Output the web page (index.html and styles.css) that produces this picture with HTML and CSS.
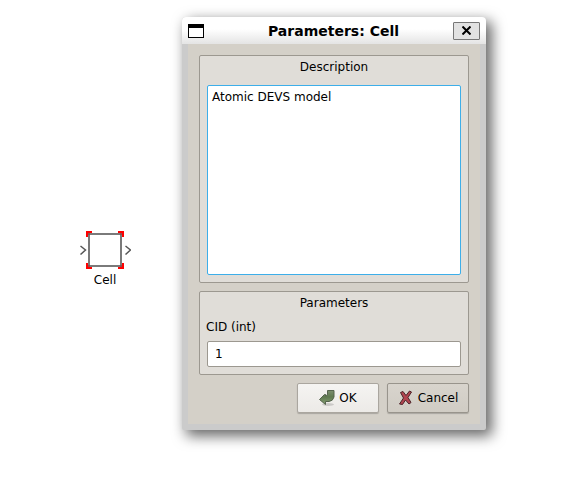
FILE: index.html
```html
<!DOCTYPE html>
<html lang="en">
<head>
<meta charset="utf-8">
<title>Parameters: Cell</title>
<link rel="stylesheet" href="styles.css">
</head>
<body>
<main class="canvas">
  <figure class="node">
    <svg class="node-shape" width="52" height="38" viewBox="0 0 52 38" aria-hidden="true">
      <path d="M7 0h6v5h-1v1H7zM39 0h6v6h-5V5h-1zM7 32h5v1h1v5H7zM40 32h5v6h-6v-5h1z" fill="red"/>
      <rect x="10" y="3" width="32" height="32" fill="#fff" stroke="#7a7a7a" stroke-width="2"/>
      <path d="M9 2h2v2H9zM41 2h2v2h-2zM9 34h2v2H9zM41 34h2v2h-2z" fill="#8a5050"/>
      <path d="M1.500 15l5 4-5 4.500M46.500 15l5 4-5 4.500" fill="none" stroke="#555" stroke-width="1.500"/>
    </svg>
    <figcaption>Cell</figcaption>
  </figure>

  <form class="dialog" role="dialog" aria-labelledby="title">
    <header class="titlebar">
      <svg width="16" height="14" viewBox="0 0 16 14" aria-hidden="true"><path d="M0 0h16v14H0z"/><path d="M1 4h14v9H1z" fill="#fff"/></svg>
      <h1 id="title">Parameters: Cell</h1>
      <button class="close" type="button" aria-label="Close">
        <svg width="9" height="9" viewBox="0 0 9 9" aria-hidden="true"><path d="M.5.5l8 8M8.500.5l-8 8" stroke="#000" stroke-width="2"/></svg>
      </button>
    </header>
    <div class="body">
      <section class="group">
        <h2><label for="description">Description</label></h2>
        <textarea id="description" class="field description">Atomic DEVS model</textarea>
      </section>
      <section class="group">
        <h2>Parameters</h2>
        <label class="label" for="cid">CID (int)</label>
        <input id="cid" class="field number" type="text" value="1">
      </section>
      <div class="actions">
        <button class="button ok" type="submit">
          <svg width="16" height="16" viewBox="0 0 16 16" aria-hidden="true">
            <defs><linearGradient id="leaf" x2="0" y2="1"><stop stop-color="#7c8e6e"/><stop offset=".45" stop-color="#5f7950"/><stop offset="1" stop-color="#86a072"/></linearGradient></defs>
            <ellipse cx="9" cy="14.500" rx="6" ry="1.500" fill="#000" opacity=".15"/>
            <path d="M8.500.5h6.500V7q-1 4-5 4.500H6.500v3L.5 9.500l5-5H6.500V6q2 0 2-2z" fill="url(#leaf)" stroke="#55634d"/>
          </svg>
          OK
        </button>
        <button class="button cancel" type="button">
          <svg width="16" height="16" viewBox="0 0 16 16" aria-hidden="true">
            <path d="M2.500 2.500l2.500-1 3 4 3.500-4.500 2 1L10 7.500l3 5-2 1.500-3.500-4-3 4.500-3-.5 4-6z" fill="#b24450" stroke="#4c2429" stroke-linejoin="round"/>
          </svg>
          Cancel
        </button>
      </div>
    </div>
  </form>
</main>
</body>
</html>
```
FILE: styles.css
```css
* {
  box-sizing: border-box;
}

body {
  margin: 0;
  background: #fff;
  color: #000;
  font: 12px/16px "DejaVu Sans", sans-serif;
}

button,
input,
textarea {
  color: inherit;
  font: inherit;
}

.canvas {
  display: flex;
  align-items: flex-start;
  gap: 51px;
  padding: 17px 75px 40px 79px;
}

.node {
  flex: none;
  margin: 214px 0 0;
  text-align: center;
}

.node-shape {
  display: block;
  margin-bottom: 3px;
}

.dialog {
  flex: 1;
  min-width: 0;
  border-radius: 4px 4px 2px 2px;
  background: #cbcbcb;
  box-shadow: 5px 5px 14px 1px rgba(0, 0, 0, 0.6);
}

.titlebar {
  display: flex;
  align-items: center;
  height: 27px;
  padding: 0 6px;
  border-radius: 4px 4px 0 0;
  background: linear-gradient(#fff 45%, #e4e4e4);
}

.titlebar h1 {
  flex: 1;
  margin: 0;
  padding-left: 10px;
  font-size: 14px;
  font-weight: bold;
  text-align: center;
}

.close {
  display: grid;
  place-items: center;
  width: 27px;
  height: 18px;
  padding: 0;
  border: 1px solid #777;
  border-radius: 1px;
  background: #e2e2e2;
}

.body {
  display: grid;
  gap: 8px;
  margin: 0 6px;
  padding: 11px;
  border-bottom: 6px solid #cbcbcb;
  background: #d4d0c8;
}

.group {
  padding: 3px 7px 7px;
  border: 1px solid #9c9890;
  border-radius: 2px;
  background: #e0ddd8;
}

.group h2 {
  margin: 0;
  font-size: 12px;
  font-weight: normal;
  text-align: center;
}

.field {
  display: block;
  width: 100%;
  border: 1px solid #9c9890;
  border-radius: 2px;
  outline: 0;
  background: #fff;
}

.description {
  height: 190px;
  margin-top: 10px;
  padding: 3px 4px;
  border-color: #3daee9;
  resize: none;
}

.label {
  display: block;
  margin: 8px -1px 6px;
}

.number {
  height: 26px;
  padding: 0 7px;
}

.actions {
  display: flex;
  justify-content: flex-end;
  gap: 8px;
}

.button {
  display: flex;
  align-items: center;
  justify-content: center;
  gap: 4px;
  width: 82px;
  height: 30px;
  padding: 0;
  border: 1px solid #98948c;
  border-radius: 2px;
  background: linear-gradient(#d8d4cd, #d0ccc4);
  box-shadow: 0 1px 1px rgba(0, 0, 0, 0.2);
}

.ok {
  border-color: #aaa69f;
  background: linear-gradient(#f5f4f2, #eceae7);
}
```
